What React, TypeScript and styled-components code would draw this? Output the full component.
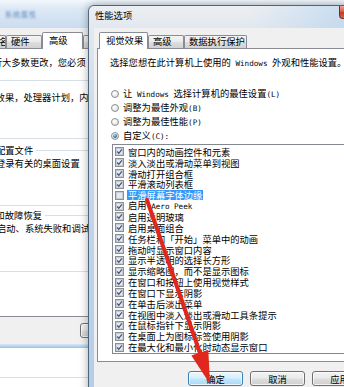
import React from 'react'
import styled, { createGlobalStyle } from 'styled-components'

const cjk = `"Noto Sans CJK SC", "Noto Sans", sans-serif`
const mono = `"DejaVu Sans Mono", "Liberation Mono", monospace`

const GlobalStyle = createGlobalStyle`
  html, body {
    margin: 0;
    padding: 0;
    background: #ffffff;
  }
`

const Desktop = styled.div`
  position: relative;
  width: 344px;
  height: 387px;
  overflow: hidden;
  display: flex;
  flex-direction: column;
  background: #ffffff;
  font-family: ${cjk};
  font-size: 9.3px;
  color: #000;
`

const Latin = styled.span`
  font-family: ${mono};
  font-size: 7.6px;
  white-space: pre;
`

/* shared tab control */

const TabStrip = styled.div<{ $indent: number }>`
  height: 17px;
  display: flex;
  align-items: flex-end;
  flex-shrink: 0;
  padding-left: ${(p) => p.$indent}px;
`

const Tab = styled.div<{ $active?: boolean; $width: number; $offset?: number }>`
  box-sizing: border-box;
  flex-shrink: 0;
  width: ${(p) => p.$width}px;
  height: ${(p) => (p.$active ? 17 : 13)}px;
  margin-left: ${(p) => p.$offset ?? 0}px;
  margin-bottom: ${(p) => (p.$active ? 0 : 1)}px;
  padding: ${(p) => (p.$active ? '1px 0 0 6px' : '0 0 0 4px')};
  line-height: ${(p) => (p.$active ? '12px' : '11px')};
  white-space: nowrap;
  overflow: hidden;
  border: 1px solid #898c95;
  border-bottom: none;
  border-radius: 2px 2px 0 0;
  position: relative;
  z-index: ${(p) => (p.$active ? 2 : 0)};
  background: ${(p) =>
    p.$active
      ? '#ffffff'
      : 'linear-gradient(180deg, #f4f4f4 0%, #ebebeb 45%, #dddddd 55%, #d2d2d2 100%)'};
`

const TabPanel = styled.div<{ $openLeft?: boolean }>`
  position: relative;
  z-index: 1;
  margin-top: -1px;
  box-sizing: border-box;
  display: flex;
  flex-direction: column;
  background: #ffffff;
  border: 1px solid #898c95;
  ${(p) => (p.$openLeft ? 'border-left: none;' : '')}
`

const Button = styled.div<{ $primary?: boolean }>`
  box-sizing: border-box;
  flex-shrink: 0;
  width: 55px;
  height: 15px;
  display: flex;
  align-items: center;
  justify-content: center;
  line-height: 12px;
  border: 1px solid ${(p) => (p.$primary ? '#3c7fb1' : '#707070')};
  border-radius: 3px;
  box-shadow: inset 0 0 0 1px rgba(255, 255, 255, 0.75);
  background: ${(p) =>
    p.$primary
      ? 'linear-gradient(180deg, #eaf6fd 0%, #d9f0fc 45%, #bee6fd 55%, #a7d9f5 100%)'
      : 'linear-gradient(180deg, #f2f2f2 0%, #ebebeb 45%, #dddddd 55%, #cfcfcf 100%)'};
`

/* background window: 系统属性 (only its right part shows, the rest is off screen) */

const BgWindow = styled.div`
  height: 348px;
  flex-shrink: 0;
  display: flex;
  flex-direction: column;
`

const BgTitleBar = styled.div`
  height: 28px;
  flex-shrink: 0;
  padding-left: 5px;
  display: flex;
  align-items: center;
  background: linear-gradient(180deg, #f3f8fd 0%, #dde9f6 30%, #cadcef 100%);
`

const BlurredTitle = styled.span`
  font-size: 7px;
  letter-spacing: 1px;
  color: #5b82b8;
  filter: blur(1.1px);
`

const BgClient = styled.div`
  flex: 1;
  width: 90px;
  overflow: hidden;
  display: flex;
  flex-direction: column;
  padding-top: 4px;
  background: #f0f0f0;
`

const BgPanel = styled(TabPanel)`
  flex: 1;
  padding-top: 7px;
  overflow: hidden;
`

const BgText = styled.div<{ $shift: number; $gap?: number }>`
  margin-left: ${(p) => p.$shift}px;
  margin-top: ${(p) => p.$gap ?? 0}px;
  line-height: 12px;
  white-space: nowrap;
`

const Group = styled.div<{ $top: number; $bottom: number }>`
  margin-top: ${(p) => p.$top}px;
  padding-bottom: ${(p) => p.$bottom}px;
  border-bottom: 1px solid #d5dfe5;
`

const GroupHead = styled.div<{ $shift: number }>`
  height: 12px;
  display: flex;
  align-items: center;
  margin-left: ${(p) => p.$shift}px;
  white-space: nowrap;
  line-height: 12px;
`

const Rule = styled.div`
  flex: 1;
  height: 1px;
  margin-left: 3px;
  background: #d5dfe5;
`

const BgButtonBar = styled.div`
  height: 27px;
  flex-shrink: 0;
  display: flex;
  padding: 6px 0 0 80px;
  box-sizing: border-box;
`

const BgFrameBottom = styled.div`
  height: 4px;
  flex-shrink: 0;
  background: linear-gradient(180deg, #d9e9f8 0%, #b3d2ee 60%, #9cc2e6 100%);
`

const BelowPane = styled.div`
  height: 29px;
  border-bottom: 1px solid #dedede;
`

/* foreground dialog: 性能选项 */

const Dialog = styled.div`
  position: absolute;
  left: 88px;
  top: 5px;
  z-index: 5;
  box-sizing: border-box;
  width: 292px;
  height: 400px;
  display: flex;
  flex-direction: column;
  padding: 0 5px;
  border: 1px solid rgba(50, 65, 85, 0.75);
  border-radius: 6px 6px 0 0;
  background: linear-gradient(90deg, rgba(255, 255, 255, 0) 55%, rgba(168, 204, 238, 0.7) 100%),
    linear-gradient(180deg, #eceff3 0%, #e2e8ef 6%, #c6d9ed 30%, #b3cde8 100%);
  box-shadow: 0 0 8px rgba(0, 0, 0, 0.35);
`

const TitleBar = styled.div`
  height: 22px;
  flex-shrink: 0;
  display: flex;
  align-items: flex-start;
`

const TitleText = styled.span`
  padding: 3px 0 0 1px;
  line-height: 12px;
`

const CloseButton = styled.div`
  box-sizing: border-box;
  width: 30px;
  height: 13px;
  margin-left: auto;
  margin-right: 5px;
  display: flex;
  align-items: center;
  justify-content: center;
  border: 1px solid #7a2a1e;
  border-top: none;
  border-radius: 0 0 4px 4px;
  background: linear-gradient(180deg, #eaa496 0%, #d8604a 45%, #c43a1f 55%, #d2694c 100%);
`

const DialogClient = styled.div`
  flex: 1;
  display: flex;
  flex-direction: column;
  padding: 4px 3px 0;
  background: #f0f0f0;
`

const DialogPanel = styled(TabPanel)`
  padding: 7px 0;
`

const Intro = styled.div`
  margin-left: 12px;
  line-height: 12px;
  white-space: nowrap;
`

const RadioGroup = styled.div`
  margin-top: 17px;
  display: flex;
  flex-direction: column;
`

const RadioRow = styled.div`
  height: 14px;
  display: flex;
  align-items: center;
  gap: 4px;
  padding-left: 13px;
  line-height: 12px;
  white-space: nowrap;
`

const Radio = styled.span<{ $checked?: boolean }>`
  box-sizing: border-box;
  flex-shrink: 0;
  width: 8px;
  height: 8px;
  border-radius: 50%;
  border: 1px solid #8e8f8f;
  display: flex;
  align-items: center;
  justify-content: center;
  background: radial-gradient(circle at 35% 35%, #ffffff 0%, #ececec 55%, #d0d0d0 100%);

  &::after {
    content: '';
    display: ${(p) => (p.$checked ? 'block' : 'none')};
    width: 4px;
    height: 4px;
    border-radius: 50%;
    background: radial-gradient(circle at 40% 35%, #a6def6 0%, #2d77ad 55%, #174d78 100%);
  }
`

const ListBox = styled.div`
  margin: 1px 12px 0 14px;
  box-sizing: border-box;
  height: 210px;
  padding-top: 1.5px;
  border: 1px solid #828790;
  background: #ffffff;
`

const ListRow = styled.div`
  height: 10.85px;
  display: flex;
  align-items: center;
  padding-left: 2px;
`

const CheckSvg = styled.svg`
  flex-shrink: 0;
  width: 9px;
  height: 9px;
`

const ItemLabel = styled.span<{ $selected?: boolean }>`
  margin-left: 3px;
  padding: 0 1px;
  line-height: 10px;
  white-space: nowrap;
  background: ${(p) => (p.$selected ? '#3399ff' : 'transparent')};
  color: ${(p) => (p.$selected ? '#ffffff' : '#000000')};
`

const ButtonRow = styled.div`
  display: flex;
  justify-content: flex-end;
  gap: 7px;
  margin-top: 9px;
  padding-right: 4px;
`

const Annotation = styled.svg`
  position: absolute;
  left: 0;
  top: 0;
  z-index: 10;
  pointer-events: none;
`

const CheckBox: React.FC<{ checked: boolean }> = ({ checked }) => (
  <CheckSvg viewBox="0 0 9 9">
    <rect x="0.5" y="0.5" width="8" height="8" fill="#f4f6f9" stroke="#8e8f8f" />
    <rect x="1.5" y="1.5" width="6" height="6" fill="#e6eaf0" stroke="#c6ccd5" />
    {checked && (
      <path d="M2.1 4.5 L3.8 6.3 L6.9 2.3" fill="none" stroke="#44557f" strokeWidth="1.3" />
    )}
  </CheckSvg>
)

const effects: { label: React.ReactNode; checked: boolean; selected?: boolean }[] = [
  { label: '窗口内的动画控件和元素', checked: true },
  { label: '淡入淡出或滑动菜单到视图', checked: true },
  { label: '滑动打开组合框', checked: true },
  { label: '平滑滚动列表框', checked: true },
  { label: '平滑屏幕字体边缘', checked: false, selected: true },
  {
    label: (
      <>
        启用<Latin> Aero Peek</Latin>
      </>
    ),
    checked: true,
  },
  { label: '启用透明玻璃', checked: true },
  { label: '启用桌面组合', checked: true },
  { label: '任务栏和「开始」菜单中的动画', checked: true },
  { label: '拖动时显示窗口内容', checked: true },
  { label: '显示半透明的选择长方形', checked: true },
  { label: '显示缩略图，而不是显示图标', checked: true },
  { label: '在窗口和按钮上使用视觉样式', checked: true },
  { label: '在窗口下显示阴影', checked: true },
  { label: '在单击后淡出菜单', checked: true },
  { label: '在视图中淡入淡出或滑动工具条提示', checked: true },
  { label: '在鼠标指针下显示阴影', checked: true },
  { label: '在桌面上为图标标签使用阴影', checked: true },
  { label: '在最大化和最小化时动态显示窗口', checked: true },
]

export default function App() {
  return (
    <>
      <GlobalStyle />
      <Desktop>
        <BgWindow>
          <BgTitleBar>
            <BlurredTitle>系统属性</BlurredTitle>
          </BgTitleBar>
          <BgClient>
            <TabStrip $indent={0}>
              <Tab $width={40} $offset={-34}>计算机名</Tab>
              <Tab $width={36}>硬件</Tab>
              <Tab $width={41} $active>
                高级
              </Tab>
              <Tab $width={50} />
            </TabStrip>
            <BgPanel $openLeft>
              <BgText $shift={-25.9}>要进行大多数更改，您必须</BgText>
              <Group $top={6} $bottom={35}>
                <GroupHead $shift={-40}>
                  性能
                  <Rule />
                </GroupHead>
                <BgText $shift={-23} $gap={5}>
                  视觉效果，处理器计划，内
                </BgText>
              </Group>
              <Group $top={5} $bottom={36}>
                <GroupHead $shift={-22.6}>
                  用户配置文件
                  <Rule />
                </GroupHead>
                <BgText $shift={-13.3} $gap={1}>
                  与登录有关的桌面设置
                </BgText>
              </Group>
              <Group $top={3} $bottom={37}>
                <GroupHead $shift={-23.1}>
                  启动和故障恢复
                  <Rule />
                </GroupHead>
                <BgText $shift={-21.6} $gap={1}>
                  系统启动、系统失败和调试
                </BgText>
              </Group>
            </BgPanel>
            <BgButtonBar>
              <Button />
            </BgButtonBar>
          </BgClient>
          <BgFrameBottom />
        </BgWindow>
        <BelowPane />

        <Dialog>
          <TitleBar>
            <TitleText>性能选项</TitleText>
            <CloseButton>
              <svg width="9" height="7" viewBox="0 0 9 7">
                <path d="M1 0.5 L8 6.5 M8 0.5 L1 6.5" stroke="#ffffff" strokeWidth="1.6" />
              </svg>
            </CloseButton>
          </TitleBar>
          <DialogClient>
            <TabStrip $indent={2}>
              <Tab $width={49} $active>
                视觉效果
              </Tab>
              <Tab $width={36}>高级</Tab>
              <Tab $width={63}>数据执行保护</Tab>
            </TabStrip>
            <DialogPanel>
              <Intro>
                选择您想在此计算机上使用的<Latin> Windows </Latin>外观和性能设置。
              </Intro>
              <RadioGroup>
                <RadioRow>
                  <Radio />
                  <span>
                    让<Latin> Windows </Latin>选择计算机的最佳设置<Latin>(L)</Latin>
                  </span>
                </RadioRow>
                <RadioRow>
                  <Radio />
                  <span>
                    调整为最佳外观<Latin>(B)</Latin>
                  </span>
                </RadioRow>
                <RadioRow>
                  <Radio />
                  <span>
                    调整为最佳性能<Latin>(P)</Latin>
                  </span>
                </RadioRow>
                <RadioRow>
                  <Radio $checked />
                  <span>
                    自定义<Latin>(C):</Latin>
                  </span>
                </RadioRow>
              </RadioGroup>
              <ListBox>
                {effects.map((item, i) => (
                  <ListRow key={i}>
                    <CheckBox checked={item.checked} />
                    <ItemLabel $selected={item.selected}>{item.label}</ItemLabel>
                  </ListRow>
                ))}
              </ListBox>
            </DialogPanel>
            <ButtonRow>
              <Button $primary>确定</Button>
              <Button>取消</Button>
              <Button>应用</Button>
            </ButtonRow>
          </DialogClient>
        </Dialog>

        <Annotation width="344" height="387" viewBox="0 0 344 387">
          <line x1="147" y1="200" x2="201" y2="356" stroke="#e1261e" strokeWidth="4" strokeLinecap="round" />
          <polygon points="210,384 208.3,349.8 191.3,355.6" fill="#e1261e" />
        </Annotation>
      </Desktop>
    </>
  )
}
